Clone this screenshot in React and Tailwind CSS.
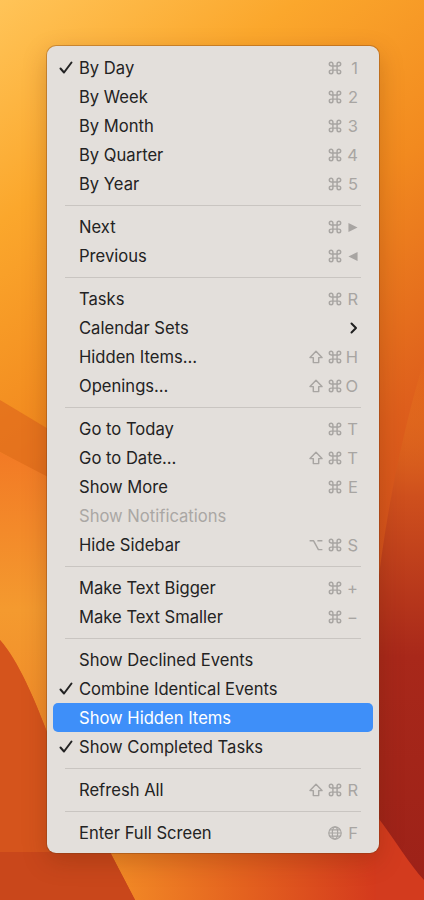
import React from 'react';

const sections = [
  [
    { label: 'By Day', checked: true, mods: ['cmd'], key: '1' },
    { label: 'By Week', mods: ['cmd'], key: '2' },
    { label: 'By Month', mods: ['cmd'], key: '3' },
    { label: 'By Quarter', mods: ['cmd'], key: '4' },
    { label: 'By Year', mods: ['cmd'], key: '5' },
  ],
  [
    { label: 'Next', mods: ['cmd'], key: 'right' },
    { label: 'Previous', mods: ['cmd'], key: 'left' },
  ],
  [
    { label: 'Tasks', mods: ['cmd'], key: 'R' },
    { label: 'Calendar Sets', submenu: true },
    { label: 'Hidden Items…', mods: ['shift', 'cmd'], key: 'H' },
    { label: 'Openings…', mods: ['shift', 'cmd'], key: 'O' },
  ],
  [
    { label: 'Go to Today', mods: ['cmd'], key: 'T' },
    { label: 'Go to Date…', mods: ['shift', 'cmd'], key: 'T' },
    { label: 'Show More', mods: ['cmd'], key: 'E' },
    { label: 'Show Notifications', disabled: true },
    { label: 'Hide Sidebar', mods: ['opt', 'cmd'], key: 'S' },
  ],
  [
    { label: 'Make Text Bigger', mods: ['cmd'], key: '+' },
    { label: 'Make Text Smaller', mods: ['cmd'], key: '−' },
  ],
  [
    { label: 'Show Declined Events' },
    { label: 'Combine Identical Events', checked: true },
    { label: 'Show Hidden Items', active: true },
    { label: 'Show Completed Tasks', checked: true },
  ],
  [{ label: 'Refresh All', mods: ['shift', 'cmd'], key: 'R' }],
  [{ label: 'Enter Full Screen', mods: ['globe'], key: 'F' }],
];

const CheckIcon = () => (
  <svg width="14" height="14" viewBox="0 0 14 14" fill="none">
    <path d="M1.5 7.5 L5 11.5 L12.5 1.5" stroke="currentColor" strokeWidth="2" strokeLinecap="round" strokeLinejoin="round" />
  </svg>
);

const Chevron = () => (
  <svg width="8" height="12" viewBox="0 0 8 12" fill="none">
    <path d="M1.5 1.5 L6 6 L1.5 10.5" stroke="#1f1f1f" strokeWidth="2" strokeLinecap="round" strokeLinejoin="round" />
  </svg>
);

// modifier key symbols
const ModIcon = ({ name }) => {
  if (name === 'globe') {
    return (
      <svg width="14" height="14" viewBox="0 0 14 14" fill="none" stroke="currentColor" strokeWidth="1.2">
        <circle cx="7" cy="7" r="6.2" />
        <ellipse cx="7" cy="7" rx="2.7" ry="6.2" />
        <path d="M0.8 7 H13.2 M1.8 3.8 H12.2 M1.8 10.2 H12.2" />
      </svg>
    );
  }
  const paths = {
    cmd: 'M4.9 4.9 V3.1 A1.8 1.8 0 1 0 3.1 4.9 H10.9 A1.8 1.8 0 1 0 9.1 3.1 V10.9 A1.8 1.8 0 1 0 10.9 9.1 H3.1 A1.8 1.8 0 1 0 4.9 10.9 Z',
    shift: 'M7 1.2 L13 7.6 H9.7 V12.6 H4.3 V7.6 H1 Z',
    opt: 'M0.6 2.8 H4.6 L9.4 11.6 H13.4 M8.4 2.8 H13.4',
  };
  return (
    <svg width="14" height="14" viewBox="0 0 14 14" fill="none">
      <path d={paths[name]} stroke="currentColor" strokeWidth="1.45" strokeLinejoin="round" />
    </svg>
  );
};

const KeyLabel = ({ k }) => {
  if (k === 'right' || k === 'left') {
    return (
      <svg width="11" height="11" viewBox="0 0 11 11">
        <path d={k === 'right' ? 'M0.5 0.5 L10.5 5.5 L0.5 10.5 Z' : 'M10.5 0.5 L0.5 5.5 L10.5 10.5 Z'} fill="currentColor" />
      </svg>
    );
  }
  return <span>{k}</span>;
};

const MenuRow = ({ item }) => {
  const textColor = item.active
    ? 'text-white'
    : item.disabled
    ? 'text-[#aaa7a4]'
    : 'text-[#232323]';
  return (
    <div
      className={`mx-[6px] flex h-[29px] items-center rounded-[5px] pl-[6px] pr-[15px] ${
        item.active ? 'bg-[#3e8ff9]' : ''
      } ${textColor}`}
    >
      <div className="flex w-[20px] items-center">{item.checked && <CheckIcon />}</div>
      <span className="mt-[2px] flex-1 text-[16.6px] leading-none">{item.label}</span>
      {item.submenu && (
        <span className="flex items-center">
          <Chevron />
        </span>
      )}
      {item.mods && (
        <span className="flex items-center gap-[5px] text-[#a8a5a2]">
          {item.mods.map((m) => (
            <ModIcon key={m} name={m} />
          ))}
          <span className="ml-[1px] mt-[2px] flex w-[10px] justify-end text-[16.5px] leading-none">
            <KeyLabel k={item.key} />
          </span>
        </span>
      )}
    </div>
  );
};

const Wallpaper = () => (
  <svg className="absolute inset-0 h-full w-full" viewBox="0 0 424 900" preserveAspectRatio="none">
    <defs>
      <linearGradient id="base" x1="0" y1="0" x2="0.35" y2="1">
        <stop offset="0" stopColor="#ffc458" />
        <stop offset="0.22" stopColor="#fba72c" />
        <stop offset="0.45" stopColor="#f28a1f" />
        <stop offset="0.7" stopColor="#de5f1c" />
        <stop offset="1" stopColor="#c8411b" />
      </linearGradient>
      <linearGradient id="right" x1="0" y1="0" x2="0" y2="1">
        <stop offset="0" stopColor="#f08a1f" stopOpacity="0" />
        <stop offset="0.25" stopColor="#cf501d" />
        <stop offset="0.55" stopColor="#a8281a" />
        <stop offset="1" stopColor="#9c2118" />
      </linearGradient>
      <linearGradient id="leftwave" x1="0" y1="0" x2="0" y2="1">
        <stop offset="0" stopColor="#f27a25" />
        <stop offset="0.55" stopColor="#f49a2f" />
        <stop offset="1" stopColor="#f08a28" />
      </linearGradient>
      <linearGradient id="bottom" x1="0" y1="0" x2="1" y2="0">
        <stop offset="0" stopColor="#f38c26" />
        <stop offset="0.5" stopColor="#e4621f" />
        <stop offset="1" stopColor="#d43a1d" />
      </linearGradient>
    </defs>
    <rect width="424" height="900" fill="url(#base)" />
    <path d="M424 360 C400 440 385 520 376 600 L376 900 L424 900 Z" fill="url(#right)" />
    <path d="M376 815 C395 840 410 865 424 880 L424 900 L376 900 Z" fill="#d33b1e" />
    <path d="M0 400 L50 430 L50 480 L0 452 Z" fill="#df6a1c" opacity="0.7" />
    <path d="M0 452 L50 478 L50 740 C35 700 18 660 0 640 Z" fill="url(#leftwave)" />
    <path d="M0 640 C18 660 35 700 50 740 L50 900 L0 900 Z" fill="#d5541c" />
    <path d="M110 852 L135 900 L376 900 L376 852 Z" fill="url(#bottom)" />
    <path d="M0 852 L110 852 L135 900 L0 900 Z" fill="#c9471b" />
  </svg>
);

export default function App() {
  return (
    <div
      className="relative h-[900px] w-[424px] overflow-hidden"
      style={{ fontFamily: 'Inter, "Noto Sans", sans-serif' }}
    >
      <Wallpaper />
      <div className="relative pl-[47px] pt-[46px]">
        <div className="w-[332px] rounded-[9px] bg-[#e3dfdb] pb-[6px] pt-[7px] shadow-[0_0_0_1px_rgba(120,60,20,0.35),0_8px_24px_rgba(90,30,0,0.25)]">
          {sections.map((section, si) => (
            <div key={si}>
              {si > 0 && (
                <div className="flex h-[14px] items-center px-[18px]">
                  <div className="h-px flex-1 bg-[#c9c5c1]" />
                </div>
              )}
              {section.map((item) => (
                <MenuRow key={item.label} item={item} />
              ))}
            </div>
          ))}
        </div>
      </div>
    </div>
  );
}
